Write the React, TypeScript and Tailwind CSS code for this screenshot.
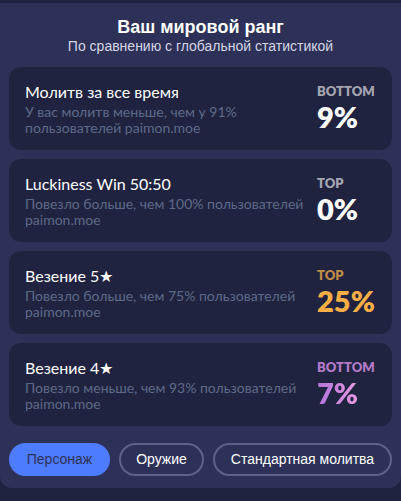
import { useState } from 'react';

type Rank = {
  title: string;
  desc: string;
  label: 'TOP' | 'BOTTOM';
  value: string;
  valueClass: string;
  labelClass: string;
};

const ranks: Rank[] = [
  {
    title: 'Молитв за все время',
    desc: 'У вас молитв меньше, чем у 91% пользователей paimon.moe',
    label: 'BOTTOM',
    value: '9%',
    valueClass: 'text-white',
    labelClass: 'text-white/60',
  },
  {
    title: 'Luckiness Win 50:50',
    desc: 'Повезло больше, чем 100% пользователей paimon.moe',
    label: 'TOP',
    value: '0%',
    valueClass: 'text-white',
    labelClass: 'text-white/60',
  },
  {
    title: 'Везение 5★',
    desc: 'Повезло больше, чем 75% пользователей paimon.moe',
    label: 'TOP',
    value: '25%',
    valueClass: 'text-[#fbae45]',
    labelClass: 'text-[#c08c45]',
  },
  {
    title: 'Везение 4★',
    desc: 'Повезло меньше, чем 93% пользователей paimon.moe',
    label: 'BOTTOM',
    value: '7%',
    valueClass: 'bg-gradient-to-r from-[#b073d9] to-[#e79ae0] bg-clip-text text-transparent',
    labelClass: 'text-[#b27ac6]',
  },
];

const tabs = [
  { name: 'Персонаж', w: 'w-[101px]' },
  { name: 'Оружие', w: 'w-[85px]' },
  { name: 'Стандартная молитва', w: 'w-[179px]' },
];

export default function App() {
  const [active, setActive] = useState(0);
  return (
    <div className="flex h-[501px] w-[401px] flex-col bg-[#202340] pt-[3px] pb-[13px] font-['Liberation_Sans',sans-serif]">
      <div className="flex flex-1 flex-col rounded-b-xl bg-[#2d3158] px-[9px]">
        <div className="flex flex-col items-center pt-[15px] pb-[14px] leading-none">
          <div className="text-[18px] font-bold text-white">Ваш мировой ранг</div>
          <div className="mt-[3px] text-[14px] text-[#d4d6e6]">По сравнению с глобальной статистикой</div>
        </div>
        <div className="flex flex-col gap-[9px]">
          {ranks.map((r) => (
            <div
              key={r.title}
              className="flex h-[83px] items-center justify-between rounded-xl bg-[#202340] px-4"
            >
              <div className="flex max-w-[285px] flex-col font-['Lato','Liberation_Sans',sans-serif]">
                <div className="text-[16px] leading-[20px] text-white">{r.title}</div>
                <div className="mt-[2px] text-[14px] leading-[16px] text-[#5d6a8a]">{r.desc}</div>
              </div>
              <div className="flex w-[59px] flex-col items-start font-['Lato','Liberation_Sans',sans-serif] font-extrabold">
                <div className={`text-[13px] leading-[16px] ${r.labelClass}`}>{r.label}</div>
                <div className={`text-[29px] leading-[35px] ${r.valueClass}`}>{r.value}</div>
              </div>
            </div>
          ))}
        </div>
        <div className="mt-[17px] flex gap-[9px]">
          {tabs.map((t, i) => (
            <button
              key={t.name}
              type="button"
              onClick={() => setActive(i)}
              className={`h-[33px] whitespace-nowrap rounded-full border-2 text-[14px] ${t.w} ${
                active === i
                  ? 'border-[#4e7cff] bg-[#4e7cff] text-[#2d3158]'
                  : 'border-[#5f6287] bg-transparent text-white'
              }`}
            >
              {t.name}
            </button>
          ))}
        </div>
      </div>
    </div>
  );
}
